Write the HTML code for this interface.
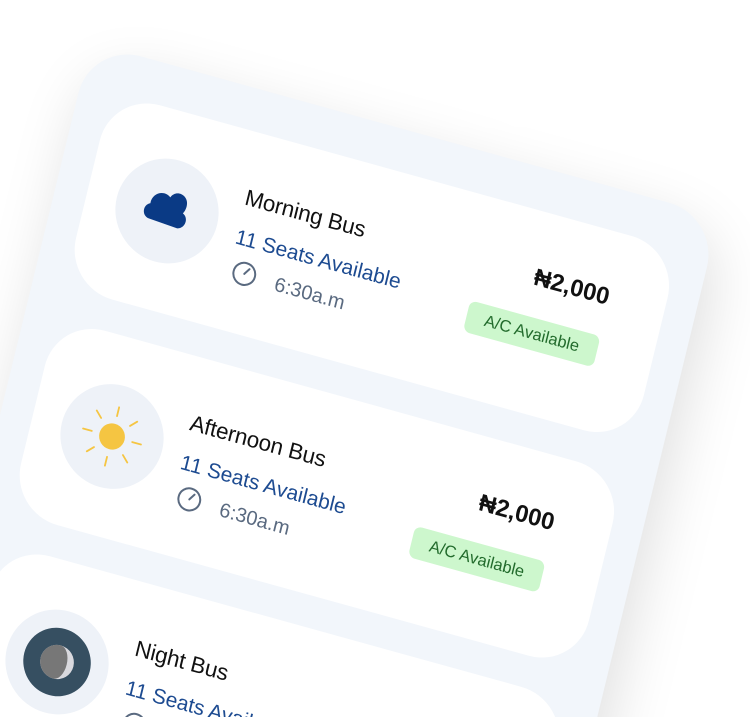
<!DOCTYPE html>
<html><head><meta charset="utf-8"><style>
html,body{margin:0;padding:0;width:750px;height:717px;overflow:hidden;background:#fff;font-family:"Liberation Sans",sans-serif}
#clip{position:absolute;left:0;top:0;width:750px;height:717px;overflow:hidden}
#w{position:absolute;left:167px;top:211px;transform:matrix(0.964,0.267,-0.237,0.972,0,0);transform-origin:0 0}
.panel{position:absolute;left:-114px;top:-142px;width:652px;height:900px;background:#f2f6fb;border-radius:52px;box-shadow:10px 20px 60px rgba(0,0,0,.13)}
.card{position:absolute;left:-82px;width:589px;height:200px;background:#fff;border-radius:50px}
.ic{position:absolute;left:30px;top:48px;width:104px;height:104px;border-radius:50%;background:#eef2f8}
.ic svg{position:absolute;left:0;top:0}
.t{position:absolute;left:155px;top:55px;font-size:22.5px;line-height:22px;color:#111;white-space:nowrap;letter-spacing:-0.2px}
.s{position:absolute;left:155px;top:96px;font-size:21px;line-height:21px;color:#1d4b91;white-space:nowrap}
.tm{position:absolute;left:204px;top:132px;font-size:20px;line-height:20px;color:#5a6a80;white-space:nowrap}
.ck{position:absolute;left:159px;top:127px}
.p{position:absolute;right:57px;top:54px;font-size:24px;line-height:24px;font-weight:bold;color:#111}
.b{position:absolute;left:398px;top:105px;width:135px;height:32px;background:#cdf7cd;border-radius:7px;color:#226b2c;font-size:16.5px;line-height:32px;text-align:center;white-space:nowrap}
</style></head><body>
<div id="clip">
<div id="w">
<div class="panel"></div>

<div class="card" style="top:-100px">
 <div class="ic"><svg width="104" height="104" viewBox="0 0 104 104"><path d="M36 64 C28 63 27 52 34 49 C33 38 45 32 52 38 C56 28 70 31 70 42 C70 46 69 48 68 50 C75 53 74 64 66 66 Z" fill="#0a3a85"/></svg></div>
 <div class="t">Morning Bus</div>
 <div class="s">11 Seats Available</div>
 <svg class="ck" width="26" height="26" viewBox="0 0 26 26"><circle cx="13" cy="13" r="11" fill="none" stroke="#5a6a80" stroke-width="2"/><path d="M13 13 L17 7" stroke="#5a6a80" stroke-width="2" stroke-linecap="round"/></svg>
 <div class="tm">6:30a.m</div>
 <div class="p">₦2,000</div>
 <div class="b">A/C Available</div>
</div>

<div class="card" style="top:132px">
 <div class="ic"><svg width="104" height="104" viewBox="0 0 104 104"><circle cx="52" cy="52" r="13" fill="#f5c542"/><g stroke="#f5c542" stroke-width="1.8" stroke-linecap="round"><path d="M52 31v-9M52 73v9M31 52h-9M73 52h9M37 37l-6-6M67 37l6-6M37 67l-6 6M67 67l6 6"/></g></svg></div>
 <div class="t">Afternoon Bus</div>
 <div class="s">11 Seats Available</div>
 <svg class="ck" width="26" height="26" viewBox="0 0 26 26"><circle cx="13" cy="13" r="11" fill="none" stroke="#5a6a80" stroke-width="2"/><path d="M13 13 L17 7" stroke="#5a6a80" stroke-width="2" stroke-linecap="round"/></svg>
 <div class="tm">6:30a.m</div>
 <div class="p">₦2,000</div>
 <div class="b">A/C Available</div>
</div>

<div class="card" style="top:364px">
 <div class="ic"><svg width="104" height="104" viewBox="0 0 104 104"><circle cx="52" cy="52" r="34" fill="#364f61"/><circle cx="52" cy="52" r="17" fill="#d9d9de"/><path d="M52 35 A17 17 0 0 0 52 69 A10 17 0 0 0 52 35 Z" fill="#777"/></svg></div>
 <div class="t">Night Bus</div>
 <div class="s">11 Seats Available</div>
 <svg class="ck" width="26" height="26" viewBox="0 0 26 26"><circle cx="13" cy="13" r="11" fill="none" stroke="#5a6a80" stroke-width="2"/><path d="M13 13 L17 7" stroke="#5a6a80" stroke-width="2" stroke-linecap="round"/></svg>
 <div class="tm">6:30a.m</div>
 <div class="p">₦2,000</div>
 <div class="b">A/C Available</div>
</div>
</div>
</div>
</body></html>
